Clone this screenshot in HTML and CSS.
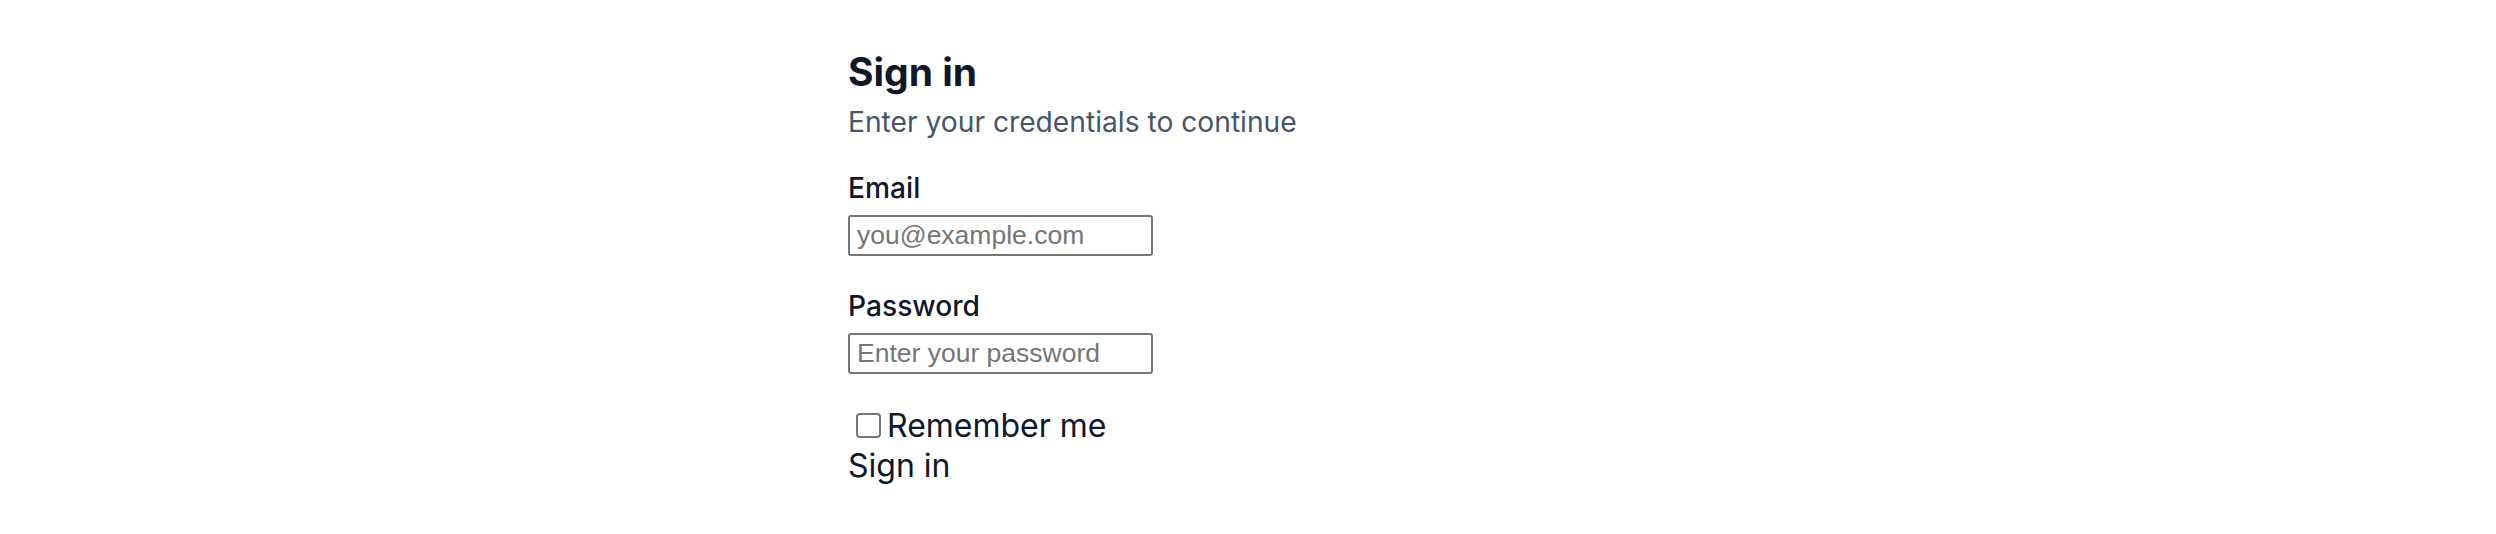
FILE: index.html
```html
<!DOCTYPE html>
<html lang="en">
<head>
    <meta charset="UTF-8">
    <meta name="viewport" content="width=device-width, initial-scale=1.0">
    <title>Sign in</title>
    <link rel="stylesheet" href="styles.css">
</head>
<body>
    <div class="wrap">
        <h1 class="title">Sign in</h1>
        <p class="sub">Enter your credentials to continue</p>
        <form class="form">
            <div class="field">
                <label class="label" for="email">Email</label>
                <input class="input" id="email" type="email" placeholder="you@example.com">
            </div>
            <div class="field">
                <label class="label" for="password">Password</label>
                <input class="input" id="password" type="password" placeholder="Enter your password">
            </div>
            <label class="remember">
                <input class="check" type="checkbox">Remember me
            </label>
            <button class="btn" type="submit">Sign in</button>
        </form>
    </div>
</body>
</html>
```

FILE: styles.css
```css
* {
    box-sizing: border-box;
}
body {
    margin: 0;
    background-color: #fff;
    font-family: Inter, "Noto Sans", sans-serif;
    color: #0f172a;
}
.wrap {
    width: 800px;
    margin: 0 auto;
    padding-top: 46px;
}
.title {
    margin: 0;
    font-size: 39px;
    line-height: 51px;
    font-weight: 700;
}
.sub {
    margin: 5px 0 0;
    font-size: 28.2px;
    line-height: 40px;
    color: #475569;
}
.form {
    display: flex;
    flex-direction: column;
    align-items: flex-start;
    margin-top: 26px;
}
.field {
    display: flex;
    flex-direction: column;
    align-items: flex-start;
    gap: 7px;
    margin-bottom: 30px;
}
.label {
    font-size: 28.2px;
    line-height: 40px;
    font-weight: 500;
}
.input {
    width: 305px;
    height: 41px;
    padding: 0 7px;
    border: 2px solid #767676;
    border-radius: 3px;
    font-family: "Liberation Sans", Arial, sans-serif;
    font-size: 26.5px;
    color: #000;
}
.input::placeholder {
    color: #757575;
}
.remember {
    display: flex;
    align-items: center;
    font-size: 32px;
    line-height: 40px;
    margin-top: 1.5px;
}
.check {
    appearance: none;
    width: 25px;
    height: 25px;
    margin: 0 6px 0 8px;
    border: 2px solid #767676;
    border-radius: 4px;
    background-color: #fff;
}
.check:checked {
    background-color: #0f172a;
    border-color: #0f172a;
}
.btn {
    padding: 0;
    border: 0;
    background: none;
    font-family: inherit;
    font-size: 32px;
    line-height: 40px;
    color: #0f172a;
    margin-top: 0;
}
```
